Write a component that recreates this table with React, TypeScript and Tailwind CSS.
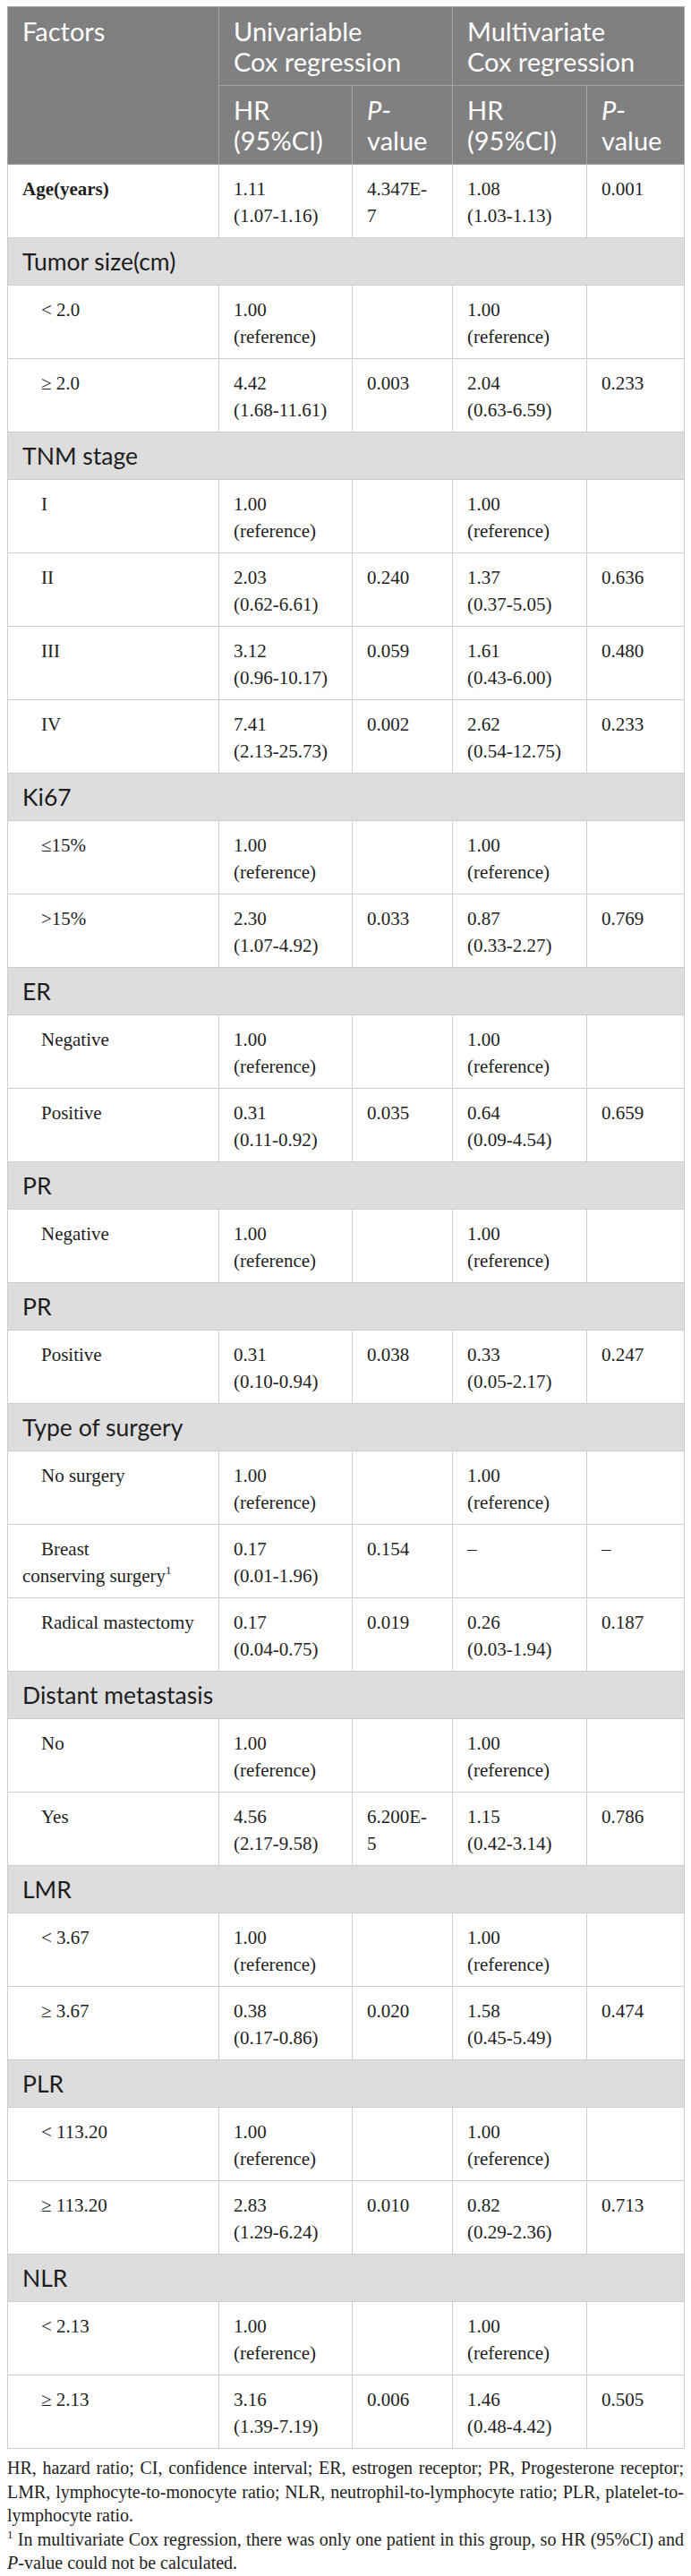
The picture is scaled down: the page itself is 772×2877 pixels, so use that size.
import React from "react";

type DataRow = {
  kind: "data";
  label: React.ReactNode;
  bold?: boolean;
  indent?: boolean;
  hr1: React.ReactNode;
  p1: React.ReactNode;
  hr2: React.ReactNode;
  p2: React.ReactNode;
};
type SectionRow = { kind: "section"; label: string };
type Row = DataRow | SectionRow;

const REF = (
  <>
    1.00
    <br />
    (reference)
  </>
);

const hr = (a: string, b: string) => (
  <>
    {a}
    <br />
    {b}
  </>
);

const rows: Row[] = [
  { kind: "data", label: "Age(years)", bold: true, hr1: hr("1.11", "(1.07-1.16)"), p1: hr("4.347E-", "7"), hr2: hr("1.08", "(1.03-1.13)"), p2: "0.001" },
  { kind: "section", label: "Tumor size(cm)" },
  { kind: "data", label: "< 2.0", indent: true, hr1: REF, p1: "", hr2: REF, p2: "" },
  { kind: "data", label: "≥ 2.0", indent: true, hr1: hr("4.42", "(1.68-11.61)"), p1: "0.003", hr2: hr("2.04", "(0.63-6.59)"), p2: "0.233" },
  { kind: "section", label: "TNM stage" },
  { kind: "data", label: "I", indent: true, hr1: REF, p1: "", hr2: REF, p2: "" },
  { kind: "data", label: "II", indent: true, hr1: hr("2.03", "(0.62-6.61)"), p1: "0.240", hr2: hr("1.37", "(0.37-5.05)"), p2: "0.636" },
  { kind: "data", label: "III", indent: true, hr1: hr("3.12", "(0.96-10.17)"), p1: "0.059", hr2: hr("1.61", "(0.43-6.00)"), p2: "0.480" },
  { kind: "data", label: "IV", indent: true, hr1: hr("7.41", "(2.13-25.73)"), p1: "0.002", hr2: hr("2.62", "(0.54-12.75)"), p2: "0.233" },
  { kind: "section", label: "Ki67" },
  { kind: "data", label: "≤15%", indent: true, hr1: REF, p1: "", hr2: REF, p2: "" },
  { kind: "data", label: ">15%", indent: true, hr1: hr("2.30", "(1.07-4.92)"), p1: "0.033", hr2: hr("0.87", "(0.33-2.27)"), p2: "0.769" },
  { kind: "section", label: "ER" },
  { kind: "data", label: "Negative", indent: true, hr1: REF, p1: "", hr2: REF, p2: "" },
  { kind: "data", label: "Positive", indent: true, hr1: hr("0.31", "(0.11-0.92)"), p1: "0.035", hr2: hr("0.64", "(0.09-4.54)"), p2: "0.659" },
  { kind: "section", label: "PR" },
  { kind: "data", label: "Negative", indent: true, hr1: REF, p1: "", hr2: REF, p2: "" },
  { kind: "section", label: "PR" },
  { kind: "data", label: "Positive", indent: true, hr1: hr("0.31", "(0.10-0.94)"), p1: "0.038", hr2: hr("0.33", "(0.05-2.17)"), p2: "0.247" },
  { kind: "section", label: "Type of surgery" },
  { kind: "data", label: "No surgery", indent: true, hr1: REF, p1: "", hr2: REF, p2: "" },
  {
    kind: "data",
    label: (
      <>
        Breast
        <br />
        conserving surgery
        <span className="text-[13px] leading-[0] align-[9px]">1</span>
      </>
    ),
    indent: true,
    hr1: hr("0.17", "(0.01-1.96)"),
    p1: "0.154",
    hr2: "–",
    p2: "–",
  },
  { kind: "data", label: "Radical mastectomy", indent: true, hr1: hr("0.17", "(0.04-0.75)"), p1: "0.019", hr2: hr("0.26", "(0.03-1.94)"), p2: "0.187" },
  { kind: "section", label: "Distant metastasis" },
  { kind: "data", label: "No", indent: true, hr1: REF, p1: "", hr2: REF, p2: "" },
  { kind: "data", label: "Yes", indent: true, hr1: hr("4.56", "(2.17-9.58)"), p1: hr("6.200E-", "5"), hr2: hr("1.15", "(0.42-3.14)"), p2: "0.786" },
  { kind: "section", label: "LMR" },
  { kind: "data", label: "< 3.67", indent: true, hr1: REF, p1: "", hr2: REF, p2: "" },
  { kind: "data", label: "≥ 3.67", indent: true, hr1: hr("0.38", "(0.17-0.86)"), p1: "0.020", hr2: hr("1.58", "(0.45-5.49)"), p2: "0.474" },
  { kind: "section", label: "PLR" },
  { kind: "data", label: "< 113.20", indent: true, hr1: REF, p1: "", hr2: REF, p2: "" },
  { kind: "data", label: "≥ 113.20", indent: true, hr1: hr("2.83", "(1.29-6.24)"), p1: "0.010", hr2: hr("0.82", "(0.29-2.36)"), p2: "0.713" },
  { kind: "section", label: "NLR" },
  { kind: "data", label: "< 2.13", indent: true, hr1: REF, p1: "", hr2: REF, p2: "" },
  { kind: "data", label: "≥ 2.13", indent: true, hr1: hr("3.16", "(1.39-7.19)"), p1: "0.006", hr2: hr("1.46", "(0.48-4.42)"), p2: "0.505" },
];

const dataCell =
  "border border-[#cdcdcd] align-top pl-[16px] pr-[6px] pt-[12px] pb-[9px] leading-[30px] text-[21px] text-[#1e1e1e]";
const headCell =
  "border border-[#a3a3a3] align-top pl-[16px] pr-[4px] pt-[10px] pb-[9px] leading-[34px] text-[29px] text-white font-normal text-left";

export default function App() {
  return (
    <div className="bg-white pt-[7px] px-[8px] pb-[6px] w-[772px]" style={{ fontFamily: '"Liberation Serif", serif' }}>
      <table className="border-collapse table-fixed w-[756px] border border-[#c8c8c8]">
        <colgroup>
          <col className="w-[236px]" />
          <col className="w-[149px]" />
          <col className="w-[112px]" />
          <col className="w-[150px]" />
          <col className="w-[109px]" />
        </colgroup>
        <thead className="bg-[#808080]" style={{ fontFamily: 'Lato, "Open Sans", sans-serif' }}>
          <tr>
            <th rowSpan={2} className={headCell}>
              Factors
            </th>
            <th colSpan={2} className={headCell}>
              Univariable
              <br />
              Cox regression
            </th>
            <th colSpan={2} className={headCell}>
              Multivariate
              <br />
              Cox regression
            </th>
          </tr>
          <tr>
            <th className={headCell}>
              HR
              <br />
              (95%CI)
            </th>
            <th className={headCell}>
              <i>P</i>-
              <br />
              value
            </th>
            <th className={headCell}>
              HR
              <br />
              (95%CI)
            </th>
            <th className={headCell}>
              <i>P</i>-
              <br />
              value
            </th>
          </tr>
        </thead>
        <tbody>
          {rows.map((r, i) =>
            r.kind === "section" ? (
              <tr key={i} className="bg-[#dddddd]">
                <td
                  colSpan={5}
                  className="border border-[#cdcdcd] pl-[16px] pt-[11px] pb-[11px] leading-[30px] text-[26.5px] text-[#1e1e1e]"
                  style={{ fontFamily: 'Lato, "Open Sans", sans-serif' }}
                >
                  {r.label}
                </td>
              </tr>
            ) : (
              <tr key={i} className="bg-white">
                <td className={`${dataCell} ${r.bold ? "font-bold" : ""} ${r.indent ? "indent-[21px]" : ""}`}>{r.label}</td>
                <td className={dataCell}>{r.hr1}</td>
                <td className={dataCell}>{r.p1}</td>
                <td className={dataCell}>{r.hr2}</td>
                <td className={dataCell}>{r.p2}</td>
              </tr>
            )
          )}
        </tbody>
      </table>
      <div className="mt-[8px] text-[20px] leading-[26.5px] text-[#1e1e1e] text-justify">
        <p>
          HR, hazard ratio; CI, confidence interval; ER, estrogen receptor; PR, Progesterone receptor; LMR,
          lymphocyte-to-monocyte ratio; NLR, neutrophil-to-lymphocyte ratio; PLR, platelet-to-lymphocyte ratio.
        </p>
        <p>
          <span className="text-[13px] leading-[0] align-[8px]">1</span> In multivariate Cox regression, there was only one
          patient in this group, so HR (95%CI) and <i>P</i>-value could not be calculated.
        </p>
      </div>
    </div>
  );
}
